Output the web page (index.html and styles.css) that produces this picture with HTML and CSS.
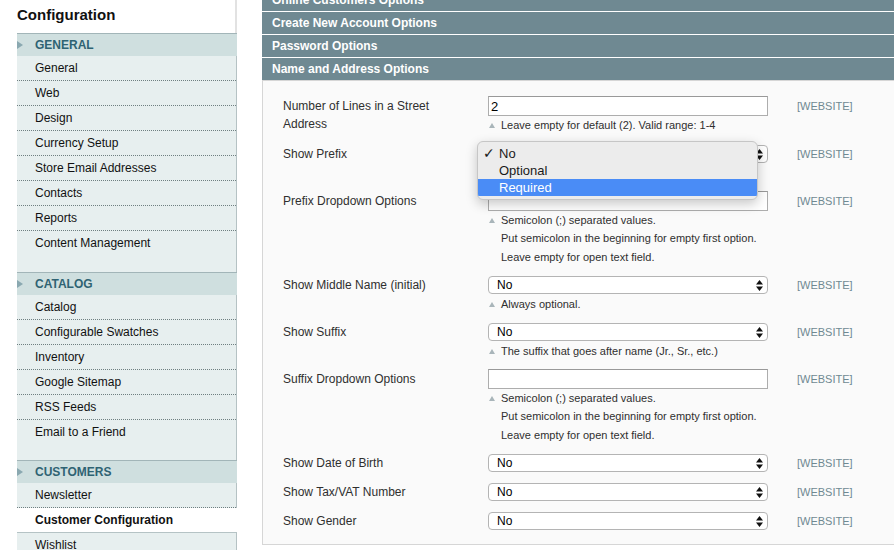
FILE: index.html
```html
<!DOCTYPE html>
<html lang="en">
<head>
<meta charset="utf-8">
<title>Configuration</title>
<link rel="stylesheet" href="styles.css">
</head>
<body>
<div class="page">
  <aside class="side">
    <h1 class="side-title">Configuration</h1>
    <nav class="side-nav">
      <div class="group">
        <div class="group-head"><span class="arrow"></span>GENERAL</div>
        <ul class="items">
          <li class="item">General</li>
          <li class="item">Web</li>
          <li class="item">Design</li>
          <li class="item">Currency Setup</li>
          <li class="item">Store Email Addresses</li>
          <li class="item">Contacts</li>
          <li class="item">Reports</li>
          <li class="item">Content Management</li>
        </ul>
      </div>
      <div class="group">
        <div class="group-head"><span class="arrow"></span>CATALOG</div>
        <ul class="items">
          <li class="item">Catalog</li>
          <li class="item">Configurable Swatches</li>
          <li class="item">Inventory</li>
          <li class="item">Google Sitemap</li>
          <li class="item">RSS Feeds</li>
          <li class="item">Email to a Friend</li>
        </ul>
      </div>
      <div class="group">
        <div class="group-head"><span class="arrow"></span>CUSTOMERS</div>
        <ul class="items">
          <li class="item">Newsletter</li>
          <li class="item item-active">Customer Configuration</li>
          <li class="item">Wishlist</li>
        </ul>
      </div>
    </nav>
  </aside>

  <main class="main">
    <div class="sec-head">Online Customers Options</div>
    <div class="sec-head">Create New Account Options</div>
    <div class="sec-head">Password Options</div>
    <div class="sec-head sec-open">Name and Address Options</div>
    <div class="sec-body">
      <div class="row">
        <div class="label">Number of Lines in a Street Address</div>
        <div class="value">
          <input class="input" type="text" value="2">
          <div class="hint"><span class="tri"></span>Leave empty for default (2). Valid range: 1-4</div>
        </div>
        <div class="scope">[WEBSITE]</div>
      </div>

      <div class="row">
        <div class="label">Show Prefix</div>
        <div class="value">
          <div class="select"><span>No</span><svg class="updown" width="7" height="11" viewBox="0 0 7 11"><path d="M3.5 0 L7 4.5 L0 4.5 Z M0 6.5 L7 6.5 L3.5 11 Z" fill="#111"/></svg></div>
          <div class="hint-spacer"></div>
          <div class="popup">
            <div class="opt"><span class="check">✓</span>No</div>
            <div class="opt"><span class="check"></span>Optional</div>
            <div class="opt opt-sel"><span class="check"></span>Required</div>
          </div>
        </div>
        <div class="scope">[WEBSITE]</div>
      </div>

      <div class="row">
        <div class="label">Prefix Dropdown Options</div>
        <div class="value">
          <input class="input" type="text" value="">
          <div class="hint"><span class="tri"></span>Semicolon (;) separated values.</div>
          <div class="hint-more">Put semicolon in the beginning for empty first option.<br>Leave empty for open text field.</div>
        </div>
        <div class="scope">[WEBSITE]</div>
      </div>

      <div class="row">
        <div class="label">Show Middle Name (initial)</div>
        <div class="value">
          <div class="select"><span>No</span><svg class="updown" width="7" height="11" viewBox="0 0 7 11"><path d="M3.5 0 L7 4.5 L0 4.5 Z M0 6.5 L7 6.5 L3.5 11 Z" fill="#111"/></svg></div>
          <div class="hint"><span class="tri"></span>Always optional.</div>
        </div>
        <div class="scope">[WEBSITE]</div>
      </div>

      <div class="row">
        <div class="label">Show Suffix</div>
        <div class="value">
          <div class="select"><span>No</span><svg class="updown" width="7" height="11" viewBox="0 0 7 11"><path d="M3.5 0 L7 4.5 L0 4.5 Z M0 6.5 L7 6.5 L3.5 11 Z" fill="#111"/></svg></div>
          <div class="hint"><span class="tri"></span>The suffix that goes after name (Jr., Sr., etc.)</div>
        </div>
        <div class="scope">[WEBSITE]</div>
      </div>

      <div class="row">
        <div class="label">Suffix Dropdown Options</div>
        <div class="value">
          <input class="input" type="text" value="">
          <div class="hint"><span class="tri"></span>Semicolon (;) separated values.</div>
          <div class="hint-more">Put semicolon in the beginning for empty first option.<br>Leave empty for open text field.</div>
        </div>
        <div class="scope">[WEBSITE]</div>
      </div>

      <div class="row">
        <div class="label">Show Date of Birth</div>
        <div class="value">
          <div class="select"><span>No</span><svg class="updown" width="7" height="11" viewBox="0 0 7 11"><path d="M3.5 0 L7 4.5 L0 4.5 Z M0 6.5 L7 6.5 L3.5 11 Z" fill="#111"/></svg></div>
        </div>
        <div class="scope">[WEBSITE]</div>
      </div>

      <div class="row">
        <div class="label">Show Tax/VAT Number</div>
        <div class="value">
          <div class="select"><span>No</span><svg class="updown" width="7" height="11" viewBox="0 0 7 11"><path d="M3.5 0 L7 4.5 L0 4.5 Z M0 6.5 L7 6.5 L3.5 11 Z" fill="#111"/></svg></div>
        </div>
        <div class="scope">[WEBSITE]</div>
      </div>

      <div class="row">
        <div class="label">Show Gender</div>
        <div class="value">
          <div class="select"><span>No</span><svg class="updown" width="7" height="11" viewBox="0 0 7 11"><path d="M3.5 0 L7 4.5 L0 4.5 Z M0 6.5 L7 6.5 L3.5 11 Z" fill="#111"/></svg></div>
        </div>
        <div class="scope">[WEBSITE]</div>
      </div>
    </div>
  </main>
</div>
</body>
</html>
```
FILE: styles.css
```css
* {
  box-sizing: border-box;
  margin: 0;
  padding: 0;
}

html, body {
  background: #fff;
}

body {
  width: 894px;
  height: 550px;
  overflow: hidden;
  font-family: "Liberation Sans", Arial, sans-serif;
  font-size: 12px;
  color: #2f2f2f;
}

.page {
  display: flex;
  align-items: flex-start;
}

/* ---------- sidebar ---------- */
.side {
  width: 220px;
  margin-left: 17px;
  flex-shrink: 0;
}

.side-title {
  height: 33px;
  line-height: 30px;
  font-size: 15px;
  font-weight: bold;
  color: #111;
  border-right: 2px solid #e2e2e2;
}

.side-nav {
  background: #e7efef;
  border-right: 1px solid #b5c2c4;
}

.group {
  padding-bottom: 15px;
}

.group:first-child {
  padding-bottom: 16px;
}

.group-head {
  height: 23px;
  border-top: 1px solid #a2b5b8;
  background: #cfdfdf;
  margin-right: -1px;
  display: flex;
  align-items: center;
  font-weight: bold;
  color: #2f6373;
}

.arrow {
  width: 0;
  height: 0;
  border-top: 4px solid transparent;
  border-bottom: 4px solid transparent;
  border-left: 6px solid #8aa8b0;
  margin-right: 12px;
}

.items {
  list-style: none;
}

.item {
  height: 25px;
  line-height: 24px;
  padding-left: 18px;
  border-bottom: 1px dotted #6f7f81;
  color: #111;
}

.item:last-child {
  border-bottom: none;
}

.item-active {
  background: #fff;
  font-weight: bold;
  margin-right: -1px;
  border-bottom: 1px solid #b5c3c5;
}

/* ---------- main ---------- */
.main {
  margin-left: 25px;
  width: 660px;
  flex-shrink: 0;
  margin-top: -11px;
}

.sec-head {
  height: 22px;
  line-height: 22px;
  background: #6f8992;
  color: #fff;
  font-weight: bold;
  padding-left: 10px;
  margin-bottom: 1px;
}

.sec-head.sec-open {
  margin-bottom: 0;
}

.sec-body {
  background: #fafafa;
  border: 1px solid #d6d6d6;
  padding: 15px 0 13px 20px;
  display: flex;
  flex-direction: column;
  gap: 9px;
}

.row {
  display: grid;
  grid-template-columns: 205px 280px auto;
}

.row:first-child {
  padding-bottom: 1px;
}

.label {
  padding-top: 1px;
  padding-right: 20px;
  line-height: 18px;
  color: #2f2f2f;
}

.value {
  position: relative;
}

.scope {
  padding-left: 29px;
  line-height: 20px;
  font-size: 11px;
  color: #6f8992;
}

.input {
  display: block;
  width: 280px;
  height: 20px;
  border: 1px solid #adadad;
  border-top-color: #999;
  background: #fff;
  font-family: "Liberation Sans", Arial, sans-serif;
  font-size: 13px;
  color: #000;
  padding: 0 2px;
  outline: none;
}

.select {
  height: 18px;
  margin: 1px 0;
  border: 1px solid #b4b4b4;
  border-radius: 4px;
  background: #fff;
  display: flex;
  align-items: center;
  justify-content: space-between;
  padding: 0 4px 0 8px;
  font-size: 12px;
  color: #000;
}

.updown {
  display: block;
}

.hint {
  display: flex;
  align-items: center;
  font-size: 11px;
  line-height: 18px;
  color: #2f2f2f;
}

.tri {
  width: 0;
  height: 0;
  border-left: 3px solid transparent;
  border-right: 3px solid transparent;
  border-bottom: 5px solid #a9b5ba;
  margin: 0 6px 0 1px;
}

.hint-more {
  font-size: 11px;
  line-height: 18.5px;
  padding-left: 13px;
  color: #2f2f2f;
}

.hint-spacer {
  height: 18px;
}

/* ---------- open dropdown menu ---------- */
.popup {
  position: absolute;
  left: -11px;
  top: -3px;
  width: 281px;
  height: 59px;
  background: #ececec;
  border: 1px solid #c6c6c6;
  border-radius: 6px;
  box-shadow: 0 4px 12px rgba(0, 0, 0, 0.22);
  padding-top: 3px;
  font-size: 13px;
  color: #1a1a1a;
  z-index: 2;
  overflow: hidden;
}

.opt {
  display: flex;
  align-items: center;
  height: 17px;
  line-height: 17px;
}

.check {
  width: 16px;
  margin-left: 5px;
  font-family: "DejaVu Sans", sans-serif;
  font-size: 14px;
}

.opt-sel {
  background: #4a8cf6;
  color: #fff;
}
```
